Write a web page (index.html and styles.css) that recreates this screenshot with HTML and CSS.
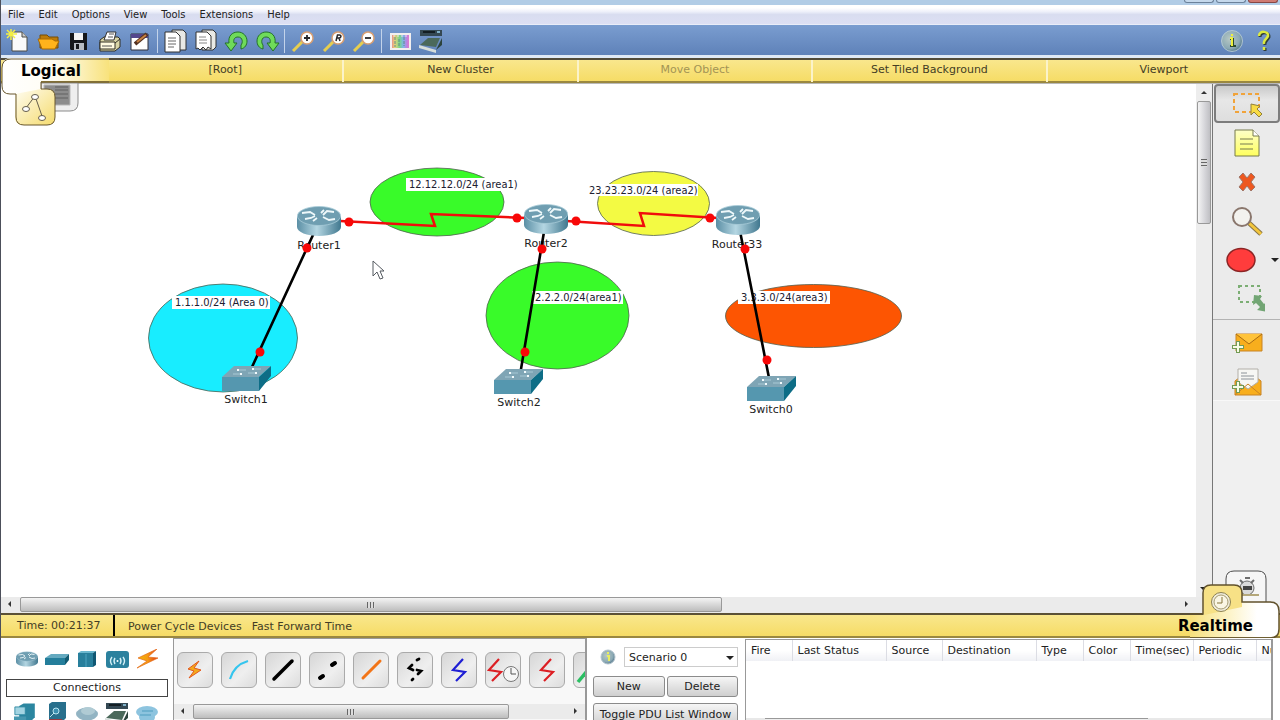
FILE: index.html
```html
<!DOCTYPE html>
<html lang="en">
<head>
<meta charset="utf-8">
<title>Network Simulator</title>
<link rel="stylesheet" href="styles.css">
</head>
<body>
<svg class="defs" aria-hidden="true">
  <defs>
    <linearGradient id="steel" x1="0" x2="1" y1="0" y2="0"><stop offset="0" stop-color="#5b8fa5"/><stop offset=".45" stop-color="#b4d6e2"/><stop offset="1" stop-color="#41788f"/></linearGradient>
    <linearGradient id="tabL" x1="0" x2="1" y1="0" y2="0"><stop offset="0" stop-color="#fff"/><stop offset=".5" stop-color="#fffdf3"/><stop offset="1" stop-color="#f8e27c"/></linearGradient>
    <linearGradient id="tabR" x1="0" x2="1" y1="0" y2="0"><stop offset="0" stop-color="#f7e07c"/><stop offset=".45" stop-color="#fdf4ca"/><stop offset=".75" stop-color="#fff"/></linearGradient>
    <linearGradient id="gold" x1="0" x2="1" y1="0" y2="1"><stop offset="0" stop-color="#fffdf2"/><stop offset="1" stop-color="#f5db6d"/></linearGradient>
    <linearGradient id="bolt" x1="0" x2="1" y1="0" y2="0"><stop offset="0" stop-color="#f0b80c"/><stop offset=".5" stop-color="#f59a10"/><stop offset="1" stop-color="#e0331a"/></linearGradient>
    <radialGradient id="ball" cx=".4" cy=".4" r=".65"><stop offset="0" stop-color="#b7c8c4"/><stop offset=".7" stop-color="#8ba9b4"/><stop offset="1" stop-color="#4f7388"/></radialGradient>
    <linearGradient id="note" x1="0" x2="0" y1="0" y2="1"><stop offset="0" stop-color="#fdffc8"/><stop offset="1" stop-color="#ffff5e"/></linearGradient>
    <linearGradient id="rainbow" x1="0" x2="1" y1="0" y2="0"><stop offset="0" stop-color="#e77a8d"/><stop offset=".2" stop-color="#e9d478"/><stop offset=".45" stop-color="#78d489"/><stop offset=".65" stop-color="#7fb4ea"/><stop offset=".85" stop-color="#c27ee0"/><stop offset="1" stop-color="#ee7abb"/></linearGradient>
    <symbol id="router" viewBox="0 0 44 30">
      <path d="M0 10v11c0 5 10 9 22 9s22-4 22-9V10z" fill="url(#steel)"/>
      <ellipse cx="22" cy="10" rx="21.6" ry="9.5" fill="#6f9eb1" stroke="#a8cbd8" stroke-width=".8"/>
      <path d="M5 7l8-1 5 3M26 9l4-4 7 1M8 13l6-1 4-2M26 11l6 3 6-1M20 12l-4 3M24 7l3-3" fill="none" stroke="#eef8fa" stroke-width="1.8"/>
    </symbol>
    <symbol id="switch" viewBox="0 0 49 25">
      <path d="M0 11L12 0h37L37 11z" fill="#7fa5b5"/><path d="M0 11h37v14H0z" fill="#5597af"/><path d="M37 11L49 0v10L37 25z" fill="#0d6d86"/>
      <path d="M16 4h8M31 3h8M11 8h8M26 7h8" stroke="#a9c9d5"/><path d="M15 4h2M30 3h2M18 8h2M33 7h2" stroke="#f2fafc" stroke-width="2"/>
    </symbol>
    <symbol id="zig" viewBox="0 0 36 36"><path d="M22 7L12 18l12 2-9 9" fill="none" stroke="currentColor" stroke-width="2.2"/></symbol>
    <symbol id="boltIcon" viewBox="0 0 24 20"><path d="M22 0L3 9l9 3L2 19 23 9 13 8z" fill="url(#bolt)" stroke="#e46a18" stroke-width=".7"/></symbol>
    <symbol id="lens" viewBox="0 0 26 26"><path d="M3 23L13 13" stroke="#e6ce50" stroke-width="3"/><circle cx="17" cy="10" r="6" fill="#fff" stroke="#d99f72" stroke-width="1.5"/></symbol>
    <symbol id="pc" viewBox="0 0 30 22"><path d="M6 3L11 0h13v16l-5 5H6z" fill="#2b86a0"/><path d="M1 4h12v9H1z" fill="#a2d4e2" stroke="#2b86a0"/><path d="M0 15h14v5H0z" fill="#4597af"/></symbol>
    <symbol id="tower" viewBox="0 0 24 22"><path d="M4 2L7 0h14v16l-4 4H4z" fill="#286f8c"/><path d="M4 18h13" stroke="#c22424" stroke-width="1.5"/><circle cx="11" cy="9" r="3" fill="#3a8eaf" stroke="#b9e4f0"/><path d="M9 11l-4 4" stroke="#b9e4f0"/></symbol>
    <symbol id="module" viewBox="0 0 26 26"><path d="M2 2h22v6H2z" fill="#344853"/><path d="M5 4h12" stroke="#131e24" stroke-width="2"/><path d="M19 4h3" stroke="#7fb0c8" stroke-width="2"/><path d="M2 17l8-7h12l-4 9z" fill="#4b695b"/><path d="M1 17l17 5v3L1 20z" fill="#d7dedb"/><path d="M18 22l6-12v7z" fill="#2c433c"/></symbol>
  </defs>
</svg>

<header>
  <div class="titlebar"><i></i><i></i><i class="close"></i></div>
  <nav class="menu"><button>File</button><button>Edit</button><button>Options</button><button>View</button><button>Tools</button><button>Extensions</button><button>Help</button></nav>
  <div class="toolbar">
    <div class="tools five">
      <button aria-label="New file"><svg width="26" height="26"><path d="M7 4h10l5 5v14H7z" fill="#fafafa" stroke="#4b4b44"/><path d="M17 4v5h5" fill="#ccc" stroke="#4b4b44"/><path d="M6 1v11M1 6h11M2 2l8 8M10 2l-8 8" stroke="#f4ef44" stroke-width="1.5"/></svg></button>
      <button aria-label="Open"><svg width="26" height="26"><path d="M4 20V7h7l2 2h9v11z" fill="#bd7c0a" stroke="#744d09"/><path d="M2 11h14l3 2h4l-4 8H6z" fill="#ffb31c" stroke="#a86a05"/></svg></button>
      <button aria-label="Save"><svg width="26" height="26"><path d="M4 5h17v17H5l-1-1z" fill="#15171a"/><path d="M8 5h9v7H8z" fill="#f4f4f4"/><path d="M8 15h10v7H8z" fill="#b7bcc2"/><path d="M10 16h3v5h-3z" fill="#15171a"/></svg></button>
      <button aria-label="Print"><svg width="26" height="26"><path d="M3 12l4-3h14l2 2v8l-5 4H3z" fill="#d9d5a6" stroke="#302f25"/><path d="M7 12l3-8h9l-2 8z" fill="#fff" stroke="#333"/><path d="M3 14h15v7H3zM18 15l5-4" fill="#fffbe0" stroke="#302f25"/><path d="M5 18h10M12 6h5M11 9h5" stroke="#555"/></svg></button>
      <button aria-label="Edit"><svg width="26" height="26"><path d="M4 6h17v16H4z" fill="#fff" stroke="#30303b"/><path d="M4 6h17v4H4z" fill="#54478d"/><path d="M8 16L20 6" stroke="#543221" stroke-width="4"/><path d="M10 14l9-7" stroke="#c88242" stroke-width="2"/></svg></button>
    </div>
    <span class="sep"></span>
    <div class="tools four">
      <button aria-label="Copy"><svg width="26" height="26"><path d="M9 2h11l3 3v17H9z" fill="#e9e9e5" stroke="#333"/><path d="M2 4h11l4 4v16H2z" fill="#fff" stroke="#333"/><path d="M5 10h8M5 13h8M5 16h8M5 19h6" stroke="#666"/></svg></button>
      <button aria-label="Paste"><svg width="26" height="26"><path d="M9 2h11l3 3v14l-3 3H9z" fill="#e9e9e5" stroke="#333"/><path d="M3 4h11l4 4v13l-3-2-2 3-3-3-3 3-2-2-2 1z" fill="#fff" stroke="#333"/><path d="M6 9h7M6 12h8M6 15h8" stroke="#888"/></svg></button>
      <button aria-label="Undo"><svg width="26" height="26"><path d="M1 15h4C4 8 8 4 14 4c5 0 9 4 9 9 0 4-2 7-6 8v-4c2-2 2-8-3-8-3 0-5 2-4 6h3l-6 8z" fill="#6fdb5a" stroke="#247229"/></svg></button>
      <button aria-label="Redo"><svg width="26" height="26"><path d="M25 15h-4c1-7-3-11-9-11-5 0-9 4-9 9 0 4 2 7 6 8v-4C7 15 7 9 12 9c3 0 5 2 4 6h-3l6 8z" fill="#6fdb5a" stroke="#247229"/></svg></button>
    </div>
    <span class="sep"></span>
    <div class="tools three">
      <button aria-label="Zoom in"><svg width="26" height="26"><use href="#lens"/><path d="M14 10h6M17 7v6" stroke="#26262a" stroke-width="1.8"/></svg></button>
      <button aria-label="Zoom reset"><svg width="26" height="26"><use href="#lens"/><path d="M15 13l1.500-6h2c2 0 2 3-.5 3h-1.500M18 10l1 3" fill="none" stroke="#26262a" stroke-width="1.5"/></svg></button>
      <button aria-label="Zoom out"><svg width="26" height="26"><use href="#lens"/><path d="M14 10h6" stroke="#26262a" stroke-width="1.8"/></svg></button>
    </div>
    <span class="sep"></span>
    <div class="tools two">
      <button aria-label="Palette"><svg width="26" height="26"><path d="M4 6h19v15H4z" fill="url(#rainbow)" stroke="#f2efef" stroke-width="2"/><path d="M6 8h15" stroke="#f5dcee" stroke-dasharray="2 2"/><path d="M8 9v10M12 11v8M17 9v9" stroke="#638a88" stroke-dasharray="3 1"/></svg></button>
      <button aria-label="Custom devices"><svg width="26" height="26"><use href="#module"/></svg></button>
    </div>
    <div class="tools two help">
      <button aria-label="Information"><svg width="26" height="26"><circle cx="13" cy="13" r="10.500" fill="url(#ball)" stroke="#c2d3d9" stroke-width=".8"/><path d="M11 11h3v7M11 18h6" fill="none" stroke="#2d4a32" stroke-width="2"/><path d="M11 10h2v8M13 6v2" fill="none" stroke="#eef03c" stroke-width="2"/></svg></button>
      <button aria-label="Help"><svg width="26" height="26"><path d="M10 9c0-6 10-5 9 0-1 3-5 4-4 8M15 20v3" fill="none" stroke="#303d38" stroke-width="3"/><path d="M9 8c0-6 10-5 9 0-1 3-5 4-4 8M14 19v3" fill="none" stroke="#dcea40" stroke-width="2.5"/></svg></button>
    </div>
  </div>
</header>

<nav class="navbar">
  <svg class="tab-left" width="108" height="70" aria-hidden="true">
    <path d="M40 25h37v20q0 8-8 8H40z" fill="#eee" stroke="#8b8b8b"/><path d="M43 27h26v20H43z" fill="#8c8c8c" stroke="#b7b7b7"/><path d="M54 29h13M54 32h13M54 36h13M54 40h13" stroke="#606060"/>
    <path d="M1 9q0-9 9-9h98v23H40v8h6q8 0 8 8v20q0 8-8 8H22q-8 0-8-8V36H9q-8 0-8-8z" fill="url(#tabL)"/>
    <path d="M40 31h6q8 0 8 8v20q0 8-8 8H22q-8 0-8-8V36l26-5z" fill="url(#gold)"/>
    <path d="M108 1H10Q1 1 1 10v18q0 8 8 8h6v23q0 8 8 8h23q8 0 8-8V39q0-8-8-8h-6v-7h68" fill="none" stroke="#68572d"/>
    <path d="M25 50l9-12 7 20" fill="none" stroke="#655d4b"/><ellipse cx="34" cy="39" rx="3.500" ry="2.500" fill="#fff" stroke="#655d4b"/><ellipse cx="25" cy="51" rx="3.500" ry="2.500" fill="#fff" stroke="#655d4b"/><ellipse cx="41" cy="60" rx="3.500" ry="2.500" fill="#fff" stroke="#655d4b"/>
  </svg>
  <h1>Logical</h1>
  <button>[Root]</button><button>New Cluster</button><button disabled>Move Object</button><button>Set Tiled Background</button><button>Viewport</button>
</nav>

<main class="workspace">
  <section class="canvas" aria-label="Topology">
    <svg width="100%" height="100%">
      <g transform="translate(-1 -84)">
        <g stroke="#50604f" stroke-width=".8">
          <ellipse cx="437" cy="202" rx="67" ry="34" fill="#39fb29"/>
          <ellipse cx="653.500" cy="203.500" rx="56" ry="32" fill="#f3fa43"/>
          <ellipse cx="223" cy="338" rx="74.500" ry="54" fill="#18edff"/>
          <ellipse cx="557.500" cy="315.500" rx="71.500" ry="53.500" fill="#39fb29"/>
          <ellipse cx="813.500" cy="316" rx="88" ry="31.500" fill="#fd5502"/>
        </g>
        <g fill="#fff"><path d="M406 178h110v13H406zM589 184h109v12H589zM172 296h98v13h-98zM532 291h91v13h-91zM738 291h92v13h-92z"/></g>
        <g class="area">
          <text x="409" y="188">12.12.12.0/24 (area1)</text>
          <text x="589" y="194">23.23.23.0/24 (area2)</text>
          <text x="175" y="306">1.1.1.0/24 (Area 0)</text>
          <text x="535" y="301">2.2.2.0/24(area1)</text>
          <text x="741" y="301">3.3.3.0/24(area3)</text>
        </g>
        <g class="device">
          <text x="319" y="249">Router1</text><text x="546" y="247">Router2</text><text x="737" y="248">Router33</text>
          <text x="246" y="403">Switch1</text><text x="519" y="406">Switch2</text><text x="771" y="413">Switch0</text>
        </g>
        <g fill="none" stroke="#000" stroke-width="2.6"><path d="M319 222L246 380M546 220L519 381M738 221L771 388"/></g>
        <g fill="none" stroke="#f00c0c" stroke-width="2.5"><path d="M340 221l95 5-4-12 95 4M566 221l78 5-4-13 78 5"/></g>
        <g fill="#f80707"><circle cx="349" cy="222" r="4.500"/><circle cx="517" cy="218" r="4.500"/><circle cx="576" cy="221" r="4.500"/><circle cx="710" cy="218" r="4.500"/><circle cx="307" cy="248" r="4.500"/><circle cx="542" cy="249" r="4.500"/><circle cx="745" cy="249" r="4.500"/><circle cx="260" cy="352" r="4.500"/><circle cx="525" cy="352" r="4.500"/><circle cx="767" cy="360" r="4.500"/></g>
        <use href="#router" x="297" y="206" width="44" height="30"/><use href="#router" x="524" y="204" width="44" height="30"/><use href="#router" x="716" y="205" width="44" height="30"/>
        <use href="#switch" x="222" y="366" width="49" height="25"/><use href="#switch" x="494" y="369" width="49" height="25"/><use href="#switch" x="747" y="376" width="49" height="25"/>
        <path d="M373 261v15l4-4 3 7 3-1-3-7h4z" fill="#fff" stroke="#555a60"/>
      </g>
    </svg>
  </section>
  <div class="vscroll"><span class="arrow up"></span><span class="thumb"><span class="grip"></span></span><span class="arrow down"></span></div>
  <div class="hscroll"><span class="arrow left"></span><span class="thumb"><span class="grip"></span></span><span class="arrow right"></span></div>
  <aside class="side">
    <button class="active" aria-label="Select"><svg width="36" height="36"><path d="M5 8h25v18H5z" fill="none" stroke="#f1a33a" stroke-width="2" stroke-dasharray="4 3"/><path d="M22 18l9 2-3 3 5 5-3 3-5-5-3 3z" fill="#f8db43" stroke="#91803b"/></svg></button>
    <button aria-label="Note"><svg width="36" height="36"><path d="M6 5h18l6 6v20H6z" fill="url(#note)" stroke="#777a4c"/><path d="M24 5v6h6" fill="#fff" stroke="#777a4c"/><path d="M11 14h13M11 19h13M11 24h13" stroke="#777b51"/></svg></button>
    <button aria-label="Delete"><svg width="36" height="36"><path d="M10 13l4-4 4 5 4-5 4 4-4 5 4 5-4 4-4-5-4 5-4-4 4-5z" fill="#ed5820" stroke="#a17567"/></svg></button>
    <button aria-label="Inspect"><svg width="36" height="36"><path d="M20 20l12 11" stroke="#877446" stroke-width="5"/><path d="M20 20l12 11" stroke="#f3c63c" stroke-width="3"/><circle cx="13" cy="14" r="9" fill="#f3f2ee" stroke="#89766c" stroke-width="2"/></svg></button>
    <button aria-label="Draw ellipse"><svg class="spill" width="36" height="36"><ellipse cx="12" cy="18" rx="14" ry="11.500" fill="#ff3c3c" stroke="#8b2525" stroke-width="1.5"/></svg><span class="arrow down menu-arrow"></span></button>
    <button aria-label="Resize shape"><svg width="36" height="36"><path d="M10 5h21v16H10z" fill="none" stroke="#7cae74" stroke-width="2" stroke-dasharray="3 3"/><path d="M25 14l8 1-2 3 4 5 3-2v10l-10-2 3-3-4-4-3 2z" fill="#72a574"/></svg></button>
    <hr>
    <button aria-label="Simple message"><svg width="36" height="36"><path d="M7 10h26v17H7z" fill="#f8ae1d" stroke="#c88325"/><path d="M7 10l13 10 13-10" fill="#ffc33a" stroke="#a96b13"/><path d="M9 17v12M3 23h12" stroke="#739b55" stroke-width="4"/><path d="M9 18v10M4 23h10" stroke="#f8fbe6" stroke-width="2"/></svg></button>
    <button aria-label="Complex message"><svg width="36" height="36"><path d="M6 18l13-10 13 10v14H6z" fill="#f8ae1d" stroke="#c88325"/><path d="M9 6h20v13l-10 7-10-7z" fill="#f7f7f4" stroke="#b2afa8"/><path d="M12 10h6M12 13h13M12 16h13" stroke="#8c9298"/><path d="M6 32l13-11 13 11" fill="none" stroke="#c88325"/><path d="M9 18v12M3 24h12" stroke="#739b55" stroke-width="4"/><path d="M9 19v10M4 24h10" stroke="#f8fbe6" stroke-width="2"/></svg></button>
    <div class="side-rest"></div>
  </aside>
</main>

<div class="timebar">
  <span class="time">Time: 00:21:37</span><button>Power Cycle Devices</button><button>Fast Forward Time</button>
  <h2>Realtime</h2>
  <svg class="tab-right" width="90" height="70" aria-hidden="true">
    <path d="M36 46V11q0-8 8-8h24q8 0 8 8v35z" fill="#f6f6f6" stroke="#4e4e4e"/><circle cx="57" cy="20" r="7" fill="#dadada" stroke="#6d6d6d"/><path d="M55 10h5M50 12l3 3M64 12l-3 3" stroke="#6d6d6d" stroke-width="2"/><path d="M53 18h9v4h-9z" fill="#444"/><path d="M52 27h17" stroke="#b4a77a" stroke-width="2"/>
    <path d="M0 47h13V25q0-8 8-8h23q8 0 8 8v9h28q9 0 9 9v18q0 8-8 8H0z" fill="url(#tabR)"/>
    <path d="M14 47V25q0-8 8-8h22q8 0 8 8v14z" fill="#f7e186"/>
    <path d="M0 46h13V25q0-8 8-8h23q8 0 8 8v9h28q9 0 9 9v18q0 9-9 9H0" fill="none" stroke="#61522d" stroke-width="1.5"/>
    <circle cx="31" cy="34" r="9.500" fill="#f1eddc" stroke="#8c8152"/><circle cx="31" cy="34" r="7" fill="#faf6e4" stroke="#a49a70"/><path d="M32 29v6h-5" fill="none" stroke="#85753a"/>
  </svg>
</div>

<footer class="dock">
  <section class="categories">
    <div class="icons">
      <button aria-label="Routers"><svg width="22" height="16"><use href="#router" width="22" height="16"/></svg></button>
      <button aria-label="Switches"><svg width="24" height="12"><path d="M0 5l6-4h18l-4 4z" fill="#65aac0"/><path d="M0 5h20v7H0z" fill="#247e9b"/><path d="M20 5l4-4v6l-4 5z" fill="#115b73"/></svg></button>
      <button aria-label="Hubs"><svg width="20" height="18"><path d="M1 3l3-2h15l-3 2z" fill="#6bb7cf"/><path d="M1 3h15v14H1z" fill="#287f9c"/><path d="M16 3l3-2v14l-3 2z" fill="#105773"/><path d="M9 4v13" stroke="#4da4c0"/></svg></button>
      <button aria-label="Wireless"><svg width="25" height="19"><rect x="1" y="1" width="23" height="17" rx="3" fill="#2b819e"/><path d="M7 7q-3 4 0 8M10 8q-2 3 0 6M18 7q3 4 0 8M15 8q2 3 0 6" fill="none" stroke="#d4f0f7" stroke-width="1.4"/><circle cx="12.500" cy="11" r="1" fill="#fff"/></svg></button>
      <button aria-label="Connections"><svg width="24" height="20"><use href="#boltIcon"/></svg></button>
    </div>
    <output>Connections</output>
    <div class="icons lower">
      <button aria-label="End devices"><svg width="26" height="22"><use href="#pc"/></svg></button>
      <button aria-label="Security"><svg width="24" height="22"><use href="#tower"/></svg></button>
      <button aria-label="WAN"><svg width="24" height="20"><ellipse cx="12" cy="11" rx="11" ry="6.500" fill="#92b4c3"/><ellipse cx="13" cy="8" rx="7" ry="4" fill="#b0cbd4"/></svg></button>
      <button aria-label="Custom"><svg width="26" height="24"><use href="#module" width="26" height="26"/></svg></button>
      <button aria-label="Multiuser"><svg width="24" height="20"><ellipse cx="12" cy="9" rx="11" ry="6" fill="#8dc4df"/><ellipse cx="12" cy="14" rx="8" ry="6" fill="#8dc4df"/><path d="M7 8h11M5 12h11" stroke="#4f9dbf"/></svg></button>
    </div>
  </section>
  <section class="cables">
    <div class="cable-list">
      <button aria-label="Automatic"><svg width="36" height="36"><path d="M22 9l-11 8 6 2-5 7 12-8-7-2z" fill="#f4a91a" stroke="#e3581e"/></svg></button>
      <button aria-label="Console"><svg width="36" height="36"><path d="M9 27Q13 13 27 9" fill="none" stroke="#35c5ee" stroke-width="2.2"/></svg></button>
      <button aria-label="Straight-through"><svg width="36" height="36"><path d="M9 27L27 9" stroke="#000" stroke-width="3.5" stroke-linecap="round"/></svg></button>
      <button aria-label="Cross-over"><svg width="36" height="36"><path d="M11 26l3-2M23 13l3-2" stroke="#000" stroke-width="4" stroke-linecap="round"/></svg></button>
      <button aria-label="Fiber"><svg width="36" height="36"><path d="M10 26L27 9" stroke="#f27518" stroke-width="3" stroke-linecap="round"/></svg></button>
      <button aria-label="Phone"><svg width="36" height="36"><path d="M22 7l-2 1M15 13l-3 3 4 2M20 18l4 1-3 3M16 27l-1 1" fill="none" stroke="#000" stroke-width="2.8" stroke-linecap="round"/></svg></button>
      <button class="blue" aria-label="Coaxial"><svg width="36" height="36"><use href="#zig"/></svg></button>
      <button class="red" aria-label="Serial DCE"><svg width="36" height="36"><use href="#zig" x="-8"/><circle cx="26" cy="22" r="7.500" fill="#f6f6f6" stroke="#777"/><path d="M26 16v6h5" fill="none" stroke="#555"/></svg></button>
      <button class="red" aria-label="Serial DTE"><svg width="36" height="36"><use href="#zig"/></svg></button>
      <button aria-label="Octal"><svg width="36" height="36"><path d="M5 30L20 12" stroke="#2bbf63" stroke-width="3.5"/></svg></button>
    </div>
    <div class="hscroll small"><span class="arrow left"></span><span class="thumb"><span class="grip"></span></span><span class="arrow right"></span></div>
  </section>
  <section class="scenario">
    <div class="pick"><svg width="16" height="16" aria-hidden="true"><circle cx="8" cy="8" r="7" fill="url(#ball)" stroke="#b3c4ce"/><path d="M7 7h2v5M8 3v2" fill="none" stroke="#e8ed60" stroke-width="2"/></svg>
      <div class="select-wrap"><select aria-label="Scenario"><option>Scenario 0</option></select><span class="arrow down"></span></div></div>
    <div class="pair"><button>New</button><button>Delete</button></div>
    <button class="toggle">Toggle PDU List Window</button>
  </section>
  <section class="pdu">
    <table>
      <colgroup><col class="w46"><col class="w94"><col class="w56"><col class="w94"><col class="w47"><col class="w47"><col class="w63"><col class="w63"><col class="w94"></colgroup>
      <thead><tr><th>Fire</th><th>Last Status</th><th>Source</th><th>Destination</th><th>Type</th><th>Color</th><th>Time(sec)</th><th>Periodic</th><th>Num</th></tr></thead>
    </table>
    <div class="pdu-scroll"><span></span></div>
  </section>
</footer>
</body>
</html>
```
FILE: styles.css
```css
* { box-sizing: border-box; }
body {
  margin: 0;
  height: 100vh;
  overflow: hidden;
  display: flex;
  flex-direction: column;
  border-left: 1px solid #4c4f5a;
  background: #fff;
  color: #222;
  font: 11px "DejaVu Sans", sans-serif;
}
button { margin: 0; padding: 0; border: 0; background: none; font: inherit; color: inherit; }
svg { display: block; flex: none; }
h1, h2 { margin: 0; font-size: 15px; line-height: 20px; color: #000; }
.defs { position: absolute; width: 0; height: 0; }

.titlebar { height: 5px; padding-right: 2px; display: flex; justify-content: flex-end; gap: 2px; background: #b1cce6; }
.titlebar i { width: 30px; height: 3px; border: 1px solid #6b819a; border-top: 0; border-radius: 0 0 4px 4px; background: #c4d8ec; }
.titlebar .close { background: #cf7b73; border-color: #884744; }
.menu {
  height: 20px;
  display: flex;
  align-items: center;
  gap: 14px;
  padding-left: 7px;
  background: linear-gradient(#fff 0 15%, #eef0fa 35%, #d9ddf0 50%, #dcdff3);
  border-bottom: 1px solid #e9edf8;
  font-family: "DejaVu Sans Condensed", "DejaVu Sans", sans-serif;
}
.toolbar { height: 33px; display: flex; align-items: center; padding: 1px 2px 3px; background: linear-gradient(#7a9dd0, #5f82b9 90%, #dfe9f6 92%); }
.tools { display: flex; justify-content: space-between; }
.tools button { width: 30px; display: flex; justify-content: center; }
.five { width: 152px; }
.four { width: 121px; }
.three { width: 91px; }
.two { width: 61px; }
.help { margin-left: auto; }
.sep { width: 1px; height: 24px; margin: 0 3px 0 2px; background: #c3d3ea; }

.navbar {
  position: relative;
  z-index: 2;
  height: 25px;
  flex: none;
  display: grid;
  grid-template-columns: 107px repeat(5, 1fr);
  background: linear-gradient(#f9e78d, #f6dc66);
  border-top: 2px solid #514b3a;
  border-bottom: 2px solid #9a8840;
}
.navbar button { padding-bottom: 3px; border-left: 2px solid #fbf3c9; color: #433d25; }
.navbar button:nth-of-type(1) { border-left: 0; }
.navbar button:disabled { color: #a39455; }
.navbar h1 { position: relative; padding-left: 20px; line-height: 22px; }
.tab-left { position: absolute; left: 0; top: -2px; }

.workspace { flex: 1; min-height: 0; display: grid; grid-template: minmax(0, 1fr) 16px / minmax(0, 1fr) 16px 68px; background: #ebebeb; border-top: 1px solid #b9b9b9; }
.canvas { background: #fff; overflow: hidden; }
.area { font-family: "DejaVu Sans Condensed", "DejaVu Sans", sans-serif; fill: #202030; }
.device { text-anchor: middle; fill: #222; }

.vscroll { grid-column: 2; grid-row: 1; display: flex; flex-direction: column; align-items: center; background: #ededed; }
.hscroll { grid-column: 1; grid-row: 2; display: flex; align-items: flex-start; background: #ebebeb; }
.thumb { display: grid; place-items: center; border: 1px solid #999; border-radius: 2px; }
.vscroll .thumb { width: 14px; height: 123px; background: linear-gradient(90deg, #f4f4f4, #d9d9dd 50%, #bfbfc3); }
.hscroll .thumb { width: 702px; height: 15px; background: linear-gradient(#f4f4f4, #d8d8d8 50%, #bdbdbd); }
.grip { width: 8px; height: 6px; background: repeating-linear-gradient(90deg, #666 0 1px, #ddd 1px 3px); }
.vscroll .grip { width: 6px; height: 8px; background: repeating-linear-gradient(#666 0 1px, #ddd 1px 3px); }
.arrow { width: 0; height: 0; border: 3px solid transparent; }
.arrow.up { margin: 4px 0 7px; border-bottom-color: #333; }
.arrow.down { border-width: 4px; border-top-color: #222; }
.vscroll .arrow.down { margin: auto 0 2px; }
.arrow.left { margin: 4px 9px 0 4px; border-right-color: #333; }
.arrow.right { margin: 4px 5px 0 auto; border-left-color: #333; }

.side { grid-column: 3; grid-row: 1 / 3; display: flex; flex-direction: column; border-left: 1px solid #777; background: #ebebeb; overflow: hidden; }
.side button { position: relative; height: 39px; flex: none; display: grid; place-items: center; }
.side .active { margin-left: 1px; border: 2px solid #7d7d7d; border-radius: 4px; background: linear-gradient(#c9c9c9, #e7e7e7 40%, #dedede); }
.side hr { width: 100%; margin: 1px 0 2px; border: 0; border-top: 1px solid #b3b3b3; }
.side-rest { flex: 1; background: #f0f0f0; border-top: 1px solid #f8f8f8; }
.spill { overflow: visible; }
.menu-arrow { position: absolute; right: 1px; top: 18px; }

.timebar {
  position: relative;
  z-index: 2;
  height: 25px;
  flex: none;
  display: flex;
  align-items: stretch;
  padding-right: 27px;
  background: linear-gradient(#f9e78d, #f6dc66);
  border-top: 2px solid #5b5136;
  border-bottom: 2px solid #9a8840;
  color: #433d25;
}
.time { width: 114px; padding-left: 16px; line-height: 22px; border-right: 2px solid #000; }
.timebar button { margin-left: 10px; padding-top: 1px; }
.time + button { margin-left: 13px; }
.timebar h2 { position: relative; z-index: 1; margin-left: auto; line-height: 22px; }
.tab-right { position: absolute; right: 0; bottom: -2px; }

.dock { height: 82px; flex: none; display: grid; grid-template-columns: 172px 414px 158px minmax(0, 1fr); overflow: hidden; padding-right: 7px; background: #fff; }
.dock > section { overflow: hidden; }
.categories { padding: 9px 5px 0; }
.icons { display: grid; grid-template-columns: repeat(5, 30px); justify-content: start; padding-left: 6px; height: 24px; align-items: center; }
.icons button { display: grid; place-items: center; }
.categories output { display: block; height: 18px; margin: 8px 0 4px; border: 1px solid #444; line-height: 16px; text-align: center; background: #fff; }
.cables { border: 1px solid #999; border-width: 1px 2px 0 1px; background: #f8f8f8; }
.cable-list { display: flex; gap: 8px; padding: 13px 0 16px 3px; overflow: hidden; }
.cable-list button { width: 36px; height: 36px; flex: none; border: 1px solid #aaa; border-radius: 6px; background: linear-gradient(135deg, #d6d6d6, #efefef 60%, #dcdcdc); overflow: hidden; }
.cable-list svg { margin: -1px; }
.blue { color: #1f1fd4; }
.red { color: #dc1f24; }
.small .thumb { width: 316px; }
.scenario { padding: 9px 7px 0 6px; display: flex; flex-direction: column; }
.pick { display: flex; align-items: center; gap: 8px; padding-left: 7px; margin-bottom: 9px; }
.select-wrap { position: relative; flex: 1; }
.select-wrap select { width: 100%; height: 20px; padding: 0 4px; appearance: none; border: 1px solid #ccc; border-radius: 0; background: #fff; color: #222; font: inherit; }
.select-wrap .arrow { position: absolute; right: 4px; top: 9px; }
.pair { display: grid; grid-template-columns: 1fr 1fr; gap: 2px; margin-bottom: 6px; }
.scenario button { height: 21px; flex: none; border: 1px solid #8b8b8b; border-radius: 3px; background: linear-gradient(#f6f6f6, #e2e2e2 50%, #cfcfcf); white-space: nowrap; }
.scenario .toggle { height: 23px; }
.pdu { display: flex; flex-direction: column; border: 1px solid #999; border-width: 1px 2px 0 1px; margin-top: 1px; }
.pdu table { width: 604px; table-layout: fixed; border-collapse: collapse; }
.pdu th { height: 21px; padding: 0 0 0 5px; border-right: 1px solid #dcdde4; text-align: left; font-weight: normal; white-space: nowrap; background: linear-gradient(#fff 50%, #f0f1f5); }
.w46 { width: 46px; } .w47 { width: 47px; } .w56 { width: 56px; } .w63 { width: 63px; } .w94 { width: 94px; }
.pdu-scroll { margin-top: auto; height: 2px; padding: 0 123px 0 19px; background: #e8e8e8; }
.pdu-scroll span { display: block; height: 2px; border-top: 1px solid #999; background: #eee; }
```
